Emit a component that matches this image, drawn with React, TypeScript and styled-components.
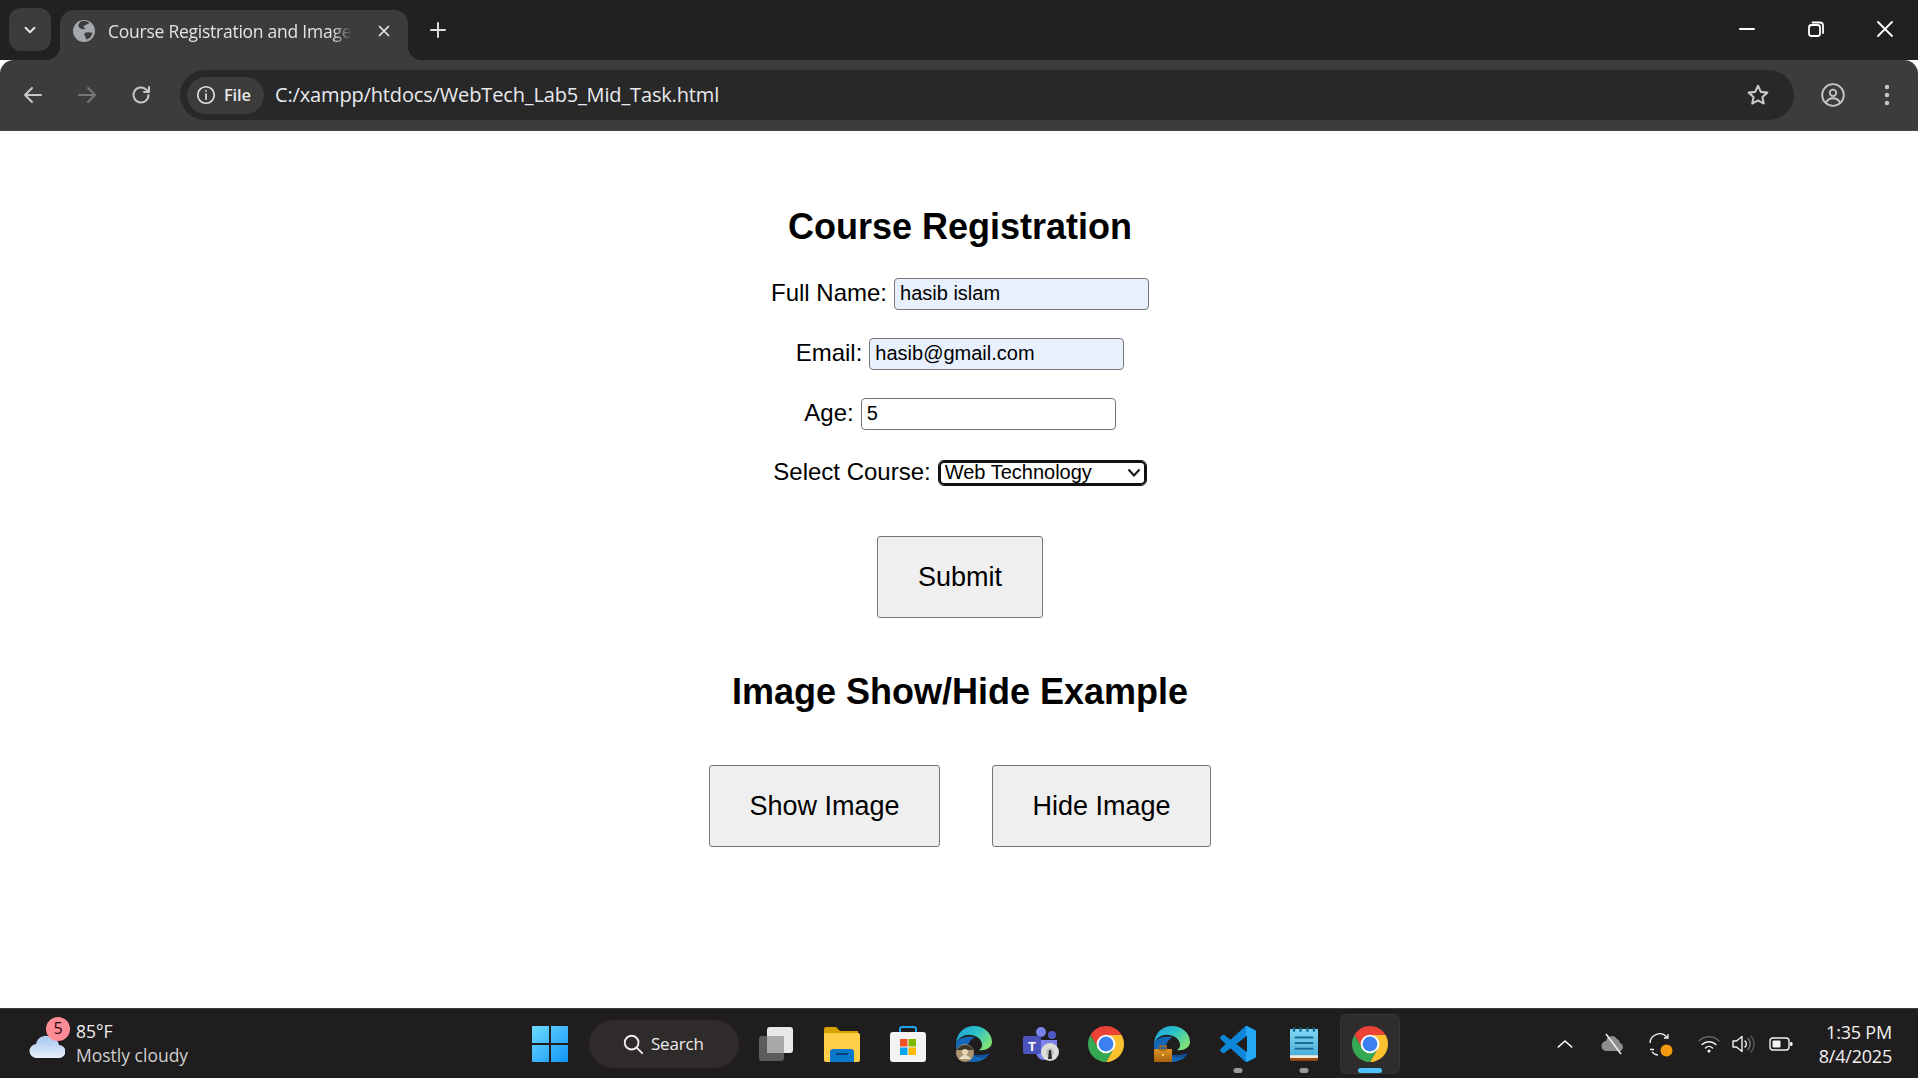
import React from "react";
import styled, { createGlobalStyle } from "styled-components";

const Global = createGlobalStyle`
  html, body { margin: 0; padding: 0; height: 100%; overflow: hidden; background: #fff; }
  #root { height: 100%; }
`;
const UI = `"Open Sans", "Noto Sans", sans-serif`;
const Shell = styled.div`display:flex;flex-direction:column;height:1078px;width:1918px;overflow:hidden;font-family:"Liberation Sans",Arial,sans-serif;`;

const TabStrip = styled.header`display:flex;align-items:flex-end;height:60px;background:#202222;flex:none;`;
const TabMenu = styled.div`width:42px;height:43px;margin:0 9px 9px 9px;border-radius:12px;background:#3b3b3b;display:flex;align-items:center;justify-content:center;`;
const Tab = styled.div`
  position:relative;width:348px;height:50px;background:#3c3c3c;border-radius:14px 14px 0 0;display:flex;align-items:center;padding:0 0 8px 13px;box-sizing:border-box;
  &::before,&::after{content:"";position:absolute;bottom:0;width:14px;height:14px;}
  &::before{left:-14px;background:radial-gradient(circle at 0 0,transparent 14px,#3c3c3c 14.5px);}
  &::after{right:-14px;background:radial-gradient(circle at 100% 0,transparent 14px,#3c3c3c 14.5px);}
`;
const TabTitle = styled.span`
  margin-left:13px;width:244px;white-space:nowrap;overflow:hidden;font:400 17.5px ${UI};letter-spacing:-.25px;color:#e3e3e3;
  -webkit-mask-image:linear-gradient(90deg,#000 92%,transparent 100%);mask-image:linear-gradient(90deg,#000 92%,transparent 100%);
`;
const TabClose = styled.div`margin-left:23px;display:flex;`;
const NewTab = styled.div`margin:0 0 18px 18px;display:flex;`;
const WindowControls = styled.div`margin:0 21px 19px auto;display:flex;gap:45px;`;
const Toolbar = styled.div`display:flex;align-items:center;height:71px;background:#3c3c3c;flex:none;padding-left:21px;box-sizing:border-box;border-radius:14px 14px 0 0;border-bottom:1px solid #4a4a4a;`;
const NavGroup = styled.div`display:flex;gap:30px;`;
const Omnibox = styled.div`width:1614px;height:50px;margin-left:27px;border-radius:25px;background:#282828;display:flex;align-items:center;padding:0 0 0 7px;box-sizing:border-box;flex:none;`;
const SiteChip = styled.div`display:flex;align-items:center;gap:7px;width:77px;height:37px;padding-left:8px;box-sizing:border-box;border-radius:19px;background:#3c3c3c;font:600 16.5px ${UI};letter-spacing:-.2px;color:#e8e8e8;`;
const ChipLabel = styled.span`margin-top:-2px;`;
const Url = styled.span`margin-left:11px;padding-bottom:2px;font:400 20px ${UI};letter-spacing:-.15px;color:#e8eaed;white-space:nowrap;flex:1;`;
const Star = styled.div`margin-right:23px;display:flex;`;
const ToolEnd = styled.div`display:flex;align-items:center;margin-left:26px;gap:38px;`;

const Page = styled.main`flex:1;background:#fff;display:flex;flex-direction:column;align-items:center;color:#000;padding-left:2px;min-height:0;`;
const Heading = styled.h2`margin:${p=>p.$top}px 0 0;font:700 36px/40px "Liberation Sans",Arial,sans-serif;`;
const Form = styled.form`display:flex;flex-direction:column;align-items:center;gap:28px;margin-top:31px;`;
const Row = styled.div`display:flex;align-items:center;gap:7px;height:${p=>p.$h||32}px;font-size:24px;line-height:28px;`;
const RowLabel = styled.label`margin-top:-2px;`;
const Field = styled.input`width:255px;height:32px;box-sizing:border-box;border:1px solid #767676;border-radius:4px;padding:0 5px 2px;margin:0;font:20px "Liberation Sans",Arial,sans-serif;color:#000;background:${p=>p.$filled?"#e8f0fe":"#fff"};outline:none;`;
const PickerWrap = styled.div`position:relative;display:flex;`;
const Picker = styled.select`appearance:none;width:209px;height:26px;box-sizing:border-box;border:1px solid #111;box-shadow:inset 0 0 0 2px #111;border-radius:6px;padding:0 0 2px 6px;margin:0;font:20px "Liberation Sans",Arial,sans-serif;color:#000;background-color:#fff;outline:none;`;
const PickerArrow = styled.svg`position:absolute;right:6px;top:7px;pointer-events:none;`;
const Action = styled.button`height:82px;box-sizing:border-box;width:${p=>p.$w}px;margin-top:${p=>p.$top||0}px;background:#efefef;border:1px solid #767676;border-radius:3px;font:27px "Liberation Sans",Arial,sans-serif;color:#000;padding:0;`;
const ButtonRow = styled.div`display:flex;gap:52px;margin-top:53px;`;

const Taskbar = styled.footer`flex:none;height:70px;box-sizing:border-box;border-top:1px solid #3d3d3d;background:#1f1d1d;display:flex;align-items:center;color:#fff;font-family:${UI};`;
const Weather = styled.div`width:532px;flex:none;display:flex;align-items:center;padding-left:29px;box-sizing:border-box;position:relative;`;
const Badge = styled.span`position:absolute;left:46px;top:-3px;width:24px;height:24px;border-radius:50%;background:#ff8b96;color:#1e0a0c;font-size:16px;line-height:23px;text-align:center;`;
const WeatherText = styled.div`margin-left:11px;display:flex;flex-direction:column;gap:1px;`;
const Temp = styled.span`font-size:17.5px;line-height:23px;color:#f0f0f0;`;
const Sky = styled.span`font-size:17.5px;line-height:23px;color:#cfcfcf;`;
const Center = styled.div`display:flex;align-items:center;flex:none;`;
const SearchPill = styled.div`margin-left:21px;width:150px;height:48px;border-radius:24px;background:#2f2b2a;display:flex;align-items:center;padding-left:33px;box-sizing:border-box;gap:7px;font-size:17px;letter-spacing:-.2px;color:#ececec;`;
const Apps = styled.div`display:flex;margin-left:4px;`;
const AppCell = styled.div`position:relative;width:66px;height:60px;display:flex;align-items:center;justify-content:center;box-sizing:border-box;
  ${p=>p.$active?"&::before{content:'';position:absolute;left:3px;right:3px;top:0;bottom:0;background:#2e2c2c;border:1px solid #383636;border-radius:6px;}":""}
  & > svg{position:relative;}
`;
const Dot = styled.span`position:absolute;bottom:1px;left:50%;transform:translateX(-50%);height:5px;border-radius:3px;width:${p=>p.$active?24:9}px;background:${p=>p.$active?"#4cc2ff":"#9a9a9a"};`;
const Tray = styled.div`flex:1;display:flex;align-items:center;padding-left:153px;`;
const TrayIcon = styled.div`position:relative;display:flex;margin-left:${p=>p.$gap}px;`;
const SyncDot = styled.svg`position:absolute;right:-1px;bottom:-1px;`;
const Clock = styled.div`margin-left:auto;padding-right:26px;text-align:right;font-size:18px;line-height:24px;letter-spacing:-.2px;color:#f2f2f2;`;

const S = { fill:"none", strokeLinecap:"round" as const, strokeLinejoin:"round" as const };
const Line = ({ size=24, color="#c7c7c7", w=2, children }: any) => (
  <svg width={size} height={size} viewBox="0 0 24 24" {...S} stroke={color} strokeWidth={w}>{children}</svg>
);
const ChromeLogo = () => (
  <svg width="36" height="36" viewBox="4 4 40 40">
    <path fill="#ea4335" d="M6.68 14A20 20 0 0 1 41.32 14H24A10 10 0 0 0 15.34 29Z"/>
    <path fill="#fcc12e" d="M41.32 14A20 20 0 0 1 24 44L32.66 29A10 10 0 0 0 24 14Z"/>
    <path fill="#34a853" d="M24 44A20 20 0 0 1 6.68 14L15.34 29A10 10 0 0 0 32.66 29Z"/>
    <circle cx="24" cy="24" r="10.4" fill="#fff"/><circle cx="24" cy="24" r="8.2" fill="#3b7ff0"/>
  </svg>
);
const EdgeLogo = ({ id, children }: any) => (
  <svg width="36" height="36" viewBox="0 0 36 36">
    <defs>
      <linearGradient id={id} x1="0" y1="0" x2="1" y2=".6"><stop offset="0" stopColor="#1b9de2"/><stop offset=".55" stopColor="#2ec4c4"/><stop offset="1" stopColor="#7fe07a"/></linearGradient>
    </defs>
    <path fill={`url(#${id})`} d="M18 0C8 0 1 7 0 17c3-6 9-9 15-8 7 1 11 5 11 10 0 2-1 4-3 5 6 1 13-2 13-8C36 7 28 0 18 0Z"/>
    <path fill="#1467b8" d="M0 17c-1 10 7 19 17 19 6 0 11-2 15-6-5 2-12 2-16-2-5-4-5-10-1-14 1-1 2-2 4-3-8-1-16 0-19 6Z"/>
    <path fill="#0f4f9c" d="M16 28c4 4 11 4 16 2l2-3c-5 2-13 3-18 1Z"/>
    {children}
  </svg>
);

const apps = [
  <svg key="t" width="36" height="36" viewBox="0 0 36 36"><rect x="1" y="10" width="25" height="25" rx="3" fill="#5c5c5c"/><rect x="9" y="1" width="26" height="26" rx="3" fill="#e8e8e8"/><rect x="9" y="10" width="17" height="17" fill="#a9a9a9"/></svg>,
  <svg key="e" width="36" height="36" viewBox="0 0 36 36"><path fill="#d9a100" d="M0 3a2 2 0 0 1 2-2h10l4 4h18v6H0Z"/><path fill="#ffcf48" d="M0 7h34a2 2 0 0 1 2 2v25a2 2 0 0 1-2 2H2a2 2 0 0 1-2-2Z"/><path fill="#0a78c8" d="M6 36V26a3 3 0 0 1 3-3h18a3 3 0 0 1 3 3v10Z"/><rect x="12" y="27" width="12" height="2" fill="#063f76"/></svg>,
  <svg key="s" width="36" height="36" viewBox="0 0 36 36"><path d="M10 8V3a2 2 0 0 1 2-2h12a2 2 0 0 1 2 2v5" fill="none" stroke="#1aa6e6" strokeWidth="2"/><rect x="0" y="6" width="36" height="30" rx="3" fill="#f3f3f3"/><rect x="10" y="13" width="7.5" height="7.5" fill="#f25022"/><rect x="18.5" y="13" width="7.5" height="7.5" fill="#7fba00"/><rect x="10" y="21.5" width="7.5" height="7.5" fill="#00a4ef"/><rect x="18.5" y="21.5" width="7.5" height="7.5" fill="#ffb900"/></svg>,
  <EdgeLogo key="ed" id="eg1">
    <circle cx="9" cy="27" r="9" fill="#a8946f"/><path d="M1 24a9 9 0 0 1 16 0Z" fill="#3d3427"/><circle cx="9" cy="26" r="3" fill="#e6d2b2"/><path d="M3 33q6-8 12 0Z" fill="#e9dfc9"/>
  </EdgeLogo>,
  <svg key="tm" width="38" height="36" viewBox="0 0 38 36"><circle cx="20" cy="6" r="5" fill="#7b83eb"/><circle cx="31" cy="9" r="4" fill="#5059c9"/><path d="M15 14h21v12a8 8 0 0 1-8 8h-5a8 8 0 0 1-8-8Z" fill="#7b83eb"/><rect x="2" y="10" width="18" height="18" rx="2" fill="#4b53bc"/><text x="11" y="24.5" textAnchor="middle" fill="#fff" fontSize="13" fontWeight="700" fontFamily="Liberation Sans">T</text><circle cx="29" cy="26" r="9" fill="#dedcd8"/><circle cx="29" cy="26" r="4" fill="#c4c2be"/><path d="M28 24h2l1 9h-4Z" fill="#2b2b30"/></svg>,
  <ChromeLogo key="c"/>,
  <EdgeLogo key="ed2" id="eg2"><defs><linearGradient id="bc" x1="0" y1="0" x2="0" y2="1"><stop offset="0" stopColor="#e0952a"/><stop offset="1" stopColor="#a8620f"/></linearGradient></defs><rect x="0" y="23" width="18" height="13" rx="1" fill="url(#bc)"/><rect x="6" y="20" width="6" height="4" fill="none" stroke="#a86a14" strokeWidth="1.5"/><rect x="8" y="28" width="2" height="2" fill="#ffd24d"/></EdgeLogo>,
  <svg key="v" width="36" height="36" viewBox="0 0 24 24"><defs><clipPath id="vb"><rect x="17" y="0" width="7" height="24"/></clipPath></defs><path id="vc" fill="#0e86d8" d="M23.15 2.587L18.21.21a1.494 1.494 0 0 0-1.705.29l-9.46 8.63-4.12-3.128a.999.999 0 0 0-1.276.057L.327 7.261A1 1 0 0 0 .326 8.74L3.899 12 .326 15.26a1 1 0 0 0 .001 1.479L1.65 17.94a.999.999 0 0 0 1.276.057l4.12-3.128 9.46 8.63a1.492 1.492 0 0 0 1.704.29l4.942-2.377A1.5 1.5 0 0 0 24 20.06V3.939a1.5 1.5 0 0 0-.85-1.352zm-5.146 14.861L10.826 12l7.178-5.448v10.896z"/><path clipPath="url(#vb)" fill="#23a9f5" d="M23.15 2.587L18.21.21a1.494 1.494 0 0 0-1.705.29L17 1v5.2l1-.2v11.4l-1-.2V23l1.2.8 4.95-2.4A1.5 1.5 0 0 0 24 20.06V3.94a1.5 1.5 0 0 0-.85-1.353z"/></svg>,
  <svg key="n" width="28" height="36" viewBox="0 0 30 36"><defs><linearGradient id="np" x1="0" y1="0" x2="0" y2="1"><stop offset="0" stopColor="#82d8f4"/><stop offset="1" stopColor="#4bafd9"/></linearGradient></defs><rect x="0" y="2" width="30" height="29" rx="1" fill="url(#np)"/><g fill="#17688f"><rect x="3" y="0" width="2.6" height="5" rx="1.3"/><rect x="10" y="0" width="2.6" height="5" rx="1.3"/><rect x="17.4" y="0" width="2.6" height="5" rx="1.3"/><rect x="24.4" y="0" width="2.6" height="5" rx="1.3"/><rect x="5" y="10" width="20" height="2"/><rect x="5" y="16" width="20" height="2"/><rect x="5" y="22" width="20" height="2"/></g><rect x="0" y="30" width="30" height="3" fill="#f0eadf"/><rect x="0" y="33" width="30" height="3" rx="1" fill="#a6500f"/></svg>,
  <ChromeLogo key="c2"/>,
];

export default function App() {
  return (
    <Shell>
      <Global />
      <TabStrip>
        <TabMenu><Line size={18} color="#e6e6e6" w={2.6}><path d="M6 9l6 6 6-6"/></Line></TabMenu>
        <Tab>
          <svg width="22" height="22" viewBox="0 0 22 22"><circle cx="11" cy="11" r="11" fill="#a5a8ad"/><path fill="#3c3c3c" d="M8 1.5c3-.8 6-.4 8.5 1.2-1.5 1.6-4 1.8-5.6 3.3-1 1 .4 2.3 2.1 2.8-3 .8-6.2.2-7.4-2.1C4.8 5 6 3 8 1.5ZM11.5 13.2c2.2-1.5 5.4-1 8-.4-.6 3.2-3 6.2-6.6 7 .9-2.100-2.300-4.600-1.400-6.600Z"/></svg>
          <TabTitle>Course Registration and Image Show/Hide</TabTitle>
          <TabClose><Line size={18} color="#f0f0f0" w={2.2}><path d="M6 6l12 12M18 6L6 18"/></Line></TabClose>
        </Tab>
        <NewTab><Line size={24} color="#dedede" w={2}><path d="M12 5v14M5 12h14"/></Line></NewTab>
        <WindowControls>
          <Line color="#fff" w={2}><path d="M5 12h14"/></Line>
          <Line color="#fff" w={1.8}><rect x="5" y="8" width="11" height="11" rx="2.5"/><path d="M8.5 5.500h7.500a3 3 0 0 1 3 3v7.500"/></Line>
          <Line color="#fff" w={1.8}><path d="M5 5l14 14M19 5L5 19"/></Line>
        </WindowControls>
      </TabStrip>
      <Toolbar>
        <NavGroup>
          <Line><path d="M20 12H5M11 5l-7 7 7 7"/></Line>
          <Line color="#767676"><path d="M4 12h15M13 5l7 7-7 7"/></Line>
          <Line><path d="M19.500 12a7.500 7.500 0 1 1-2.300-5.400L20 9M20 4v5h-5"/></Line>
        </NavGroup>
        <Omnibox>
          <SiteChip>
            <Line size={22} color="#e4e4e4" w={1.8}><circle cx="12" cy="12" r="9"/><path d="M12 11v5.500"/><path d="M12 7.500v.2"/></Line>
            <ChipLabel>File</ChipLabel>
          </SiteChip>
          <Url>C:/xampp/htdocs/WebTech_Lab5_Mid_Task.html</Url>
          <Star><Line size={26} color="#c7c7c7" w={1.9}><path d="M12 3.500l2.600 5.600 6 .7-4.500 4.100 1.200 6L12 17l-5.300 2.900 1.200-6-4.500-4.100 6-.7Z"/></Line></Star>
        </Omnibox>
        <ToolEnd>
          <Line size={26} color="#c7c7c7" w={1.7}><circle cx="12" cy="12" r="10"/><circle cx="12" cy="10" r="3"/><path d="M5.500 19c1.500-3 4-4 6.500-4s5 1 6.500 4"/></Line>
          <svg width="6" height="24" viewBox="0 0 6 24" fill="#c7c7c7"><circle cx="3" cy="4" r="2.200"/><circle cx="3" cy="12" r="2.200"/><circle cx="3" cy="20" r="2.200"/></svg>
        </ToolEnd>
      </Toolbar>
      <Page>
        <Heading $top={76}>Course Registration</Heading>
        <Form>
          <Row><RowLabel>Full Name:</RowLabel><Field $filled readOnly value="hasib islam" /></Row>
          <Row><RowLabel>Email:</RowLabel><Field $filled readOnly value="hasib@gmail.com" /></Row>
          <Row><RowLabel>Age:</RowLabel><Field readOnly value="5" /></Row>
          <Row $h={30}>
            <RowLabel>Select Course:</RowLabel>
            <PickerWrap>
              <Picker defaultValue="Web Technology"><option>Web Technology</option></Picker>
              <PickerArrow width="14" height="12" viewBox="0 0 14 12" fill="none" stroke="#111" strokeWidth="2"><path d="M1.500 2.500L7 8.500l5.500-6"/></PickerArrow>
            </PickerWrap>
          </Row>
        </Form>
        <Action type="button" $w={166} $top={48}>Submit</Action>
        <Heading $top={54}>Image Show/Hide Example</Heading>
        <ButtonRow>
          <Action type="button" $w={231}>Show Image</Action>
          <Action type="button" $w={219}>Hide Image</Action>
        </ButtonRow>
      </Page>
      <Taskbar>
        <Weather>
          <svg width="36" height="30" viewBox="0 0 36 30"><defs><linearGradient id="cl" x1="0" y1="0" x2="0" y2="1"><stop offset="0" stopColor="#a6c5f0"/><stop offset="1" stopColor="#e8f0fb"/></linearGradient></defs><circle cx="31" cy="6" r="4" fill="#f09a2a"/><path fill="url(#cl)" d="M8 29a7 7 0 0 1-1-14 10 10 0 0 1 17-5 7 7 0 0 1 6 6 6.500 6.500 0 0 1 0 13Z"/></svg>
          <Badge>5</Badge>
          <WeatherText><Temp>85°F</Temp><Sky>Mostly cloudy</Sky></WeatherText>
        </Weather>
        <Center>
          <svg width="36" height="36" viewBox="0 0 36 36"><defs><linearGradient id="wn" x1="0" y1="0" x2="1" y2="1"><stop offset="0" stopColor="#6fdcff"/><stop offset="1" stopColor="#0f93f5"/></linearGradient></defs><path fill="url(#wn)" d="M0 1a1 1 0 0 1 1-1h16v17H0ZM19 0h16a1 1 0 0 1 1 1v16H19ZM0 19h17v17H1a1 1 0 0 1-1-1ZM19 19h17v16a1 1 0 0 1-1 1H19Z"/></svg>
          <SearchPill>
            <Line size={22} color="#f0f0f0" w={2}><circle cx="10.500" cy="10.500" r="7.500"/><path d="M16 16l6 6"/></Line>
            Search
          </SearchPill>
          <Apps>
            {apps.map((a, i) => (
              <AppCell key={i} $active={i === 9}>{a}{(i === 7 || i === 8) && <Dot />}{i === 9 && <Dot $active />}</AppCell>
            ))}
          </Apps>
        </Center>
        <Tray>
          <Line size={18} color="#fff" w={2.2}><path d="M3 16l9-8 9 8"/></Line>
          <TrayIcon $gap={27}><svg width="24" height="24" viewBox="0 0 24 24"><path fill="#8d8d8d" d="M6 19a5 5 0 0 1-1-10 6 6 0 0 1 11-2 5 5 0 0 1 3 4 4.200 4.200 0 0 1 0 8Z"/><path d="M5 2l15 20" stroke="#eee" strokeWidth="1.600"/></svg></TrayIcon>
          <TrayIcon $gap={23}>
            <svg width="24" height="24" viewBox="0 0 24 24" fill="none" stroke="#f2f2f2" strokeWidth="1.300"><path d="M2 11a9.500 9.500 0 0 1 17-5.500M20 2v4h-4M2 17.500h4M4 20a9 9 0 0 0 6 3"/></svg>
            <SyncDot width="13" height="13" viewBox="0 0 13 13"><circle cx="6.500" cy="6.500" r="6" fill="#f59a0e"/></SyncDot>
          </TrayIcon>
          <TrayIcon $gap={26}><svg width="22" height="22" viewBox="0 0 22 22" fill="none" strokeLinecap="round"><path d="M1 8a14 14 0 0 1 20 0" stroke="#666" strokeWidth="1.400"/><path d="M4 11.500a10 10 0 0 1 14 0" stroke="#f2f2f2" strokeWidth="1.500"/><path d="M7.500 15a5 5 0 0 1 7 0" stroke="#f2f2f2" strokeWidth="1.500"/><circle cx="11" cy="18" r="1.600" fill="#f2f2f2"/></svg></TrayIcon>
          <TrayIcon $gap={11}><svg width="24" height="24" viewBox="0 0 24 24" fill="none" strokeWidth="1.400" strokeLinecap="round"><path d="M2 9h3.500L11 4.500v15L5.500 15H2Z" stroke="#f2f2f2" strokeLinejoin="round"/><path d="M14 9a4 4 0 0 1 0 6" stroke="#f2f2f2"/><path d="M17 6.500a8 8 0 0 1 0 11" stroke="#777"/><path d="M20 4a12 12 0 0 1 0 16" stroke="#555"/></svg></TrayIcon>
          <TrayIcon $gap={14}><svg width="24" height="24" viewBox="0 0 24 24"><rect x="1" y="6" width="19" height="12" rx="3" fill="none" stroke="#f2f2f2" strokeWidth="1.400"/><rect x="3.500" y="8.500" width="8" height="7" rx="1" fill="#f2f2f2"/><rect x="21" y="10" width="2.500" height="4" rx="1" fill="#f2f2f2"/></svg></TrayIcon>
          <Clock>1:35 PM<br />8/4/2025</Clock>
        </Tray>
      </Taskbar>
    </Shell>
  );
}
